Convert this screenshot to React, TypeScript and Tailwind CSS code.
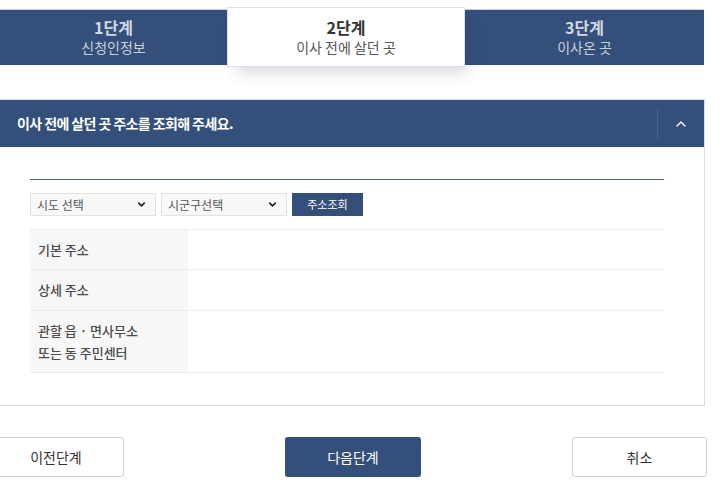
import { ChevronUp, ChevronDown } from "lucide-react";

const STEPS = [
  { no: "1단계", name: "신청인정보", w: "w-[227px]" },
  { no: "2단계", name: "이사 전에 살던 곳", w: "w-[238px]" },
  { no: "3단계", name: "이사온 곳", w: "flex-1" },
];
const CURRENT = 1;

const ROWS = [
  { label: ["기본 주소"], h: "h-[40px]" },
  { label: ["상세 주소"], h: "h-[41px]" },
  { label: ["관할 읍 · 면사무소", "또는 동 주민센터"], h: "h-[62px]" },
];

function Select({ text }: { text: string }) {
  return (
    <div className="flex h-[23px] w-[126px] items-center justify-between border border-[#e2e2e2] bg-[#f8f8f8] pl-[6px] pr-[8px]">
      <span className="text-[12px] text-[#555]">{text}</span>
      <ChevronDown className="size-[11px] text-[#222]" strokeWidth={3.5} />
    </div>
  );
}

export default function App() {
  return (
    <div className="relative h-[500px] w-[720px] overflow-hidden bg-white font-['Noto_Sans_CJK_KR','Noto_Sans',sans-serif]">
      {/* steps */}
      <div className="mt-[9px] flex h-[56px] w-[704px] border-t border-[#c9d1de] bg-[#344f7a]">
        {STEPS.map((s, i) =>
          i === CURRENT ? (
            <div key={s.no} className={`relative z-10 -mt-[3px] flex h-[60px] flex-col items-center justify-center border border-[#dde1e7] bg-white shadow-[6px_10px_14px_-4px_rgba(40,50,70,0.18)] ${s.w}`}>
              <div className="text-[16px] font-bold leading-[20px] text-[#333]">{s.no}</div>
              <div className="text-[14px] leading-[20px] text-[#555]">{s.name}</div>
            </div>
          ) : (
            <div key={s.no} className={`flex flex-col items-center justify-center pb-[2px] ${s.w}`}>
              <div className="text-[16px] font-bold leading-[20px] text-[#d2d8e2]">{s.no}</div>
              <div className="text-[14px] leading-[20px] text-[#c9d0dc]">{s.name}</div>
            </div>
          )
        )}
      </div>

      {/* panel */}
      <div className="mt-[34px] w-[705px] border-t border-r border-b border-[#d8dbe0]">
        <div className="flex h-[47px] items-center bg-[#344f7a]">
          <div className="flex-1 pl-[17px] text-[14px] font-bold tracking-[-0.6px] text-white">이사 전에 살던 곳 주소를 조회해 주세요.</div>
          <div className="h-[32px] w-px bg-[#4b638b]" />
          <div className="flex w-[46px] items-center justify-center">
            <ChevronUp className="size-[16px] text-white" strokeWidth={2} />
          </div>
        </div>

        <div className="pt-[32px] pb-[32px] pl-[30px] pr-[40px]">
          <div className="h-px bg-[#4f6282]" />
          <div className="mt-[13px] flex gap-[5px]">
            <Select text="시도 선택" />
            <Select text="시군구선택" />
            <button className="h-[23px] w-[71px] bg-[#344f7a] text-[11px] text-white">주소조회</button>
          </div>

          <div className="mt-[13px] border-t border-[#ededed]">
            {ROWS.map((r) => (
              <div key={r.label[0]} className={`flex border-b border-[#ededed] ${r.h}`}>
                <div className="flex w-[158px] flex-col justify-center bg-[#f7f7f7] pl-[8px]">
                  {r.label.map((l) => (
                    <div key={l} className="text-[13px] font-medium leading-[22px] text-[#4a4a4a]">{l}</div>
                  ))}
                </div>
                <div className="flex-1" />
              </div>
            ))}
          </div>
        </div>
      </div>

      {/* buttons */}
      <div className="mt-[31px] flex">
        <button className="-ml-[12px] h-[40px] w-[136px] rounded-[3px] border border-[#cfcfcf] bg-white text-[14px] text-[#333]">이전단계</button>
        <button className="ml-[161px] h-[40px] w-[136px] rounded-[3px] bg-[#344f7a] text-[14px] text-white">다음단계</button>
        <button className="ml-[151px] h-[40px] w-[135px] rounded-[3px] border border-[#cfcfcf] bg-white text-[14px] text-[#333]">취소</button>
      </div>
    </div>
  );
}
